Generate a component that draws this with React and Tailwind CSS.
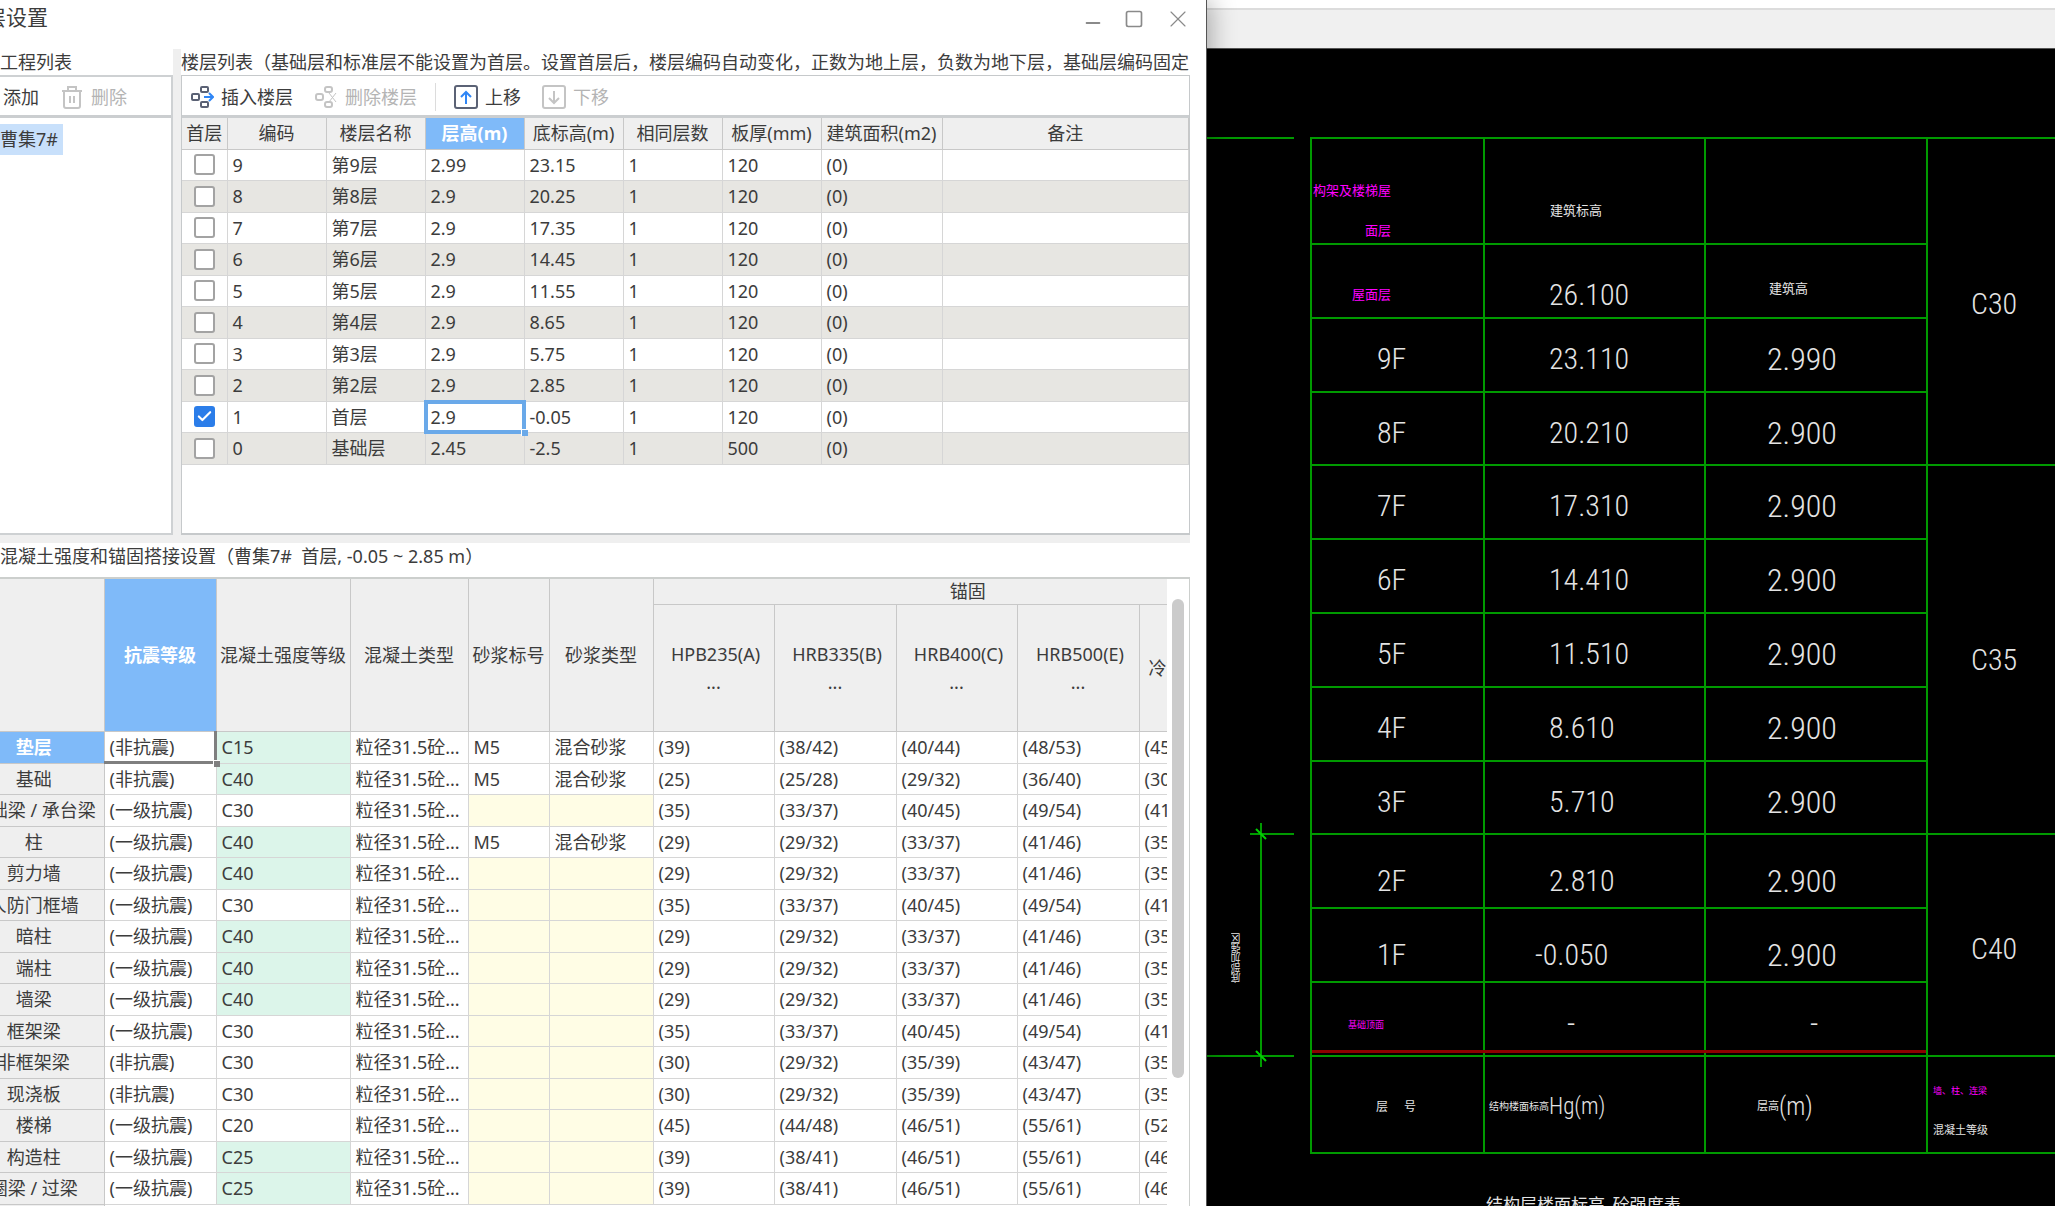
import React, { useState } from "react";
import { Check, Minus, Square, X } from "lucide-react";

const floorRows = [
  ["9", "第9层", "2.99", "23.15", "120"],
  ["8", "第8层", "2.9", "20.25", "120"],
  ["7", "第7层", "2.9", "17.35", "120"],
  ["6", "第6层", "2.9", "14.45", "120"],
  ["5", "第5层", "2.9", "11.55", "120"],
  ["4", "第4层", "2.9", "8.65", "120"],
  ["3", "第3层", "2.9", "5.75", "120"],
  ["2", "第2层", "2.9", "2.85", "120"],
  ["1", "首层", "2.9", "-0.05", "120"],
  ["0", "基础层", "2.45", "-2.5", "500"],
];

const floorHeads = ["首层", "编码", "楼层名称", "层高(m)", "底标高(m)", "相同层数", "板厚(mm)", "建筑面积(m2)", "备注"];

const NONE = "(非抗震)";
const FIRST = "(一级抗震)";

// name, seismic grade, concrete, tinted concrete cell, has mortar, anchorage values
const concreteRows = [
  ["垫层", NONE, "C15", true, true, "(39)", "(38/42)", "(40/44)", "(48/53)", "(45)"],
  ["基础", NONE, "C40", true, true, "(25)", "(25/28)", "(29/32)", "(36/40)", "(30)"],
  ["基础梁 / 承台梁", FIRST, "C30", false, false, "(35)", "(33/37)", "(40/45)", "(49/54)", "(41)"],
  ["柱", FIRST, "C40", true, true, "(29)", "(29/32)", "(33/37)", "(41/46)", "(35)"],
  ["剪力墙", FIRST, "C40", true, false, "(29)", "(29/32)", "(33/37)", "(41/46)", "(35)"],
  ["人防门框墙", FIRST, "C30", false, false, "(35)", "(33/37)", "(40/45)", "(49/54)", "(41)"],
  ["暗柱", FIRST, "C40", true, false, "(29)", "(29/32)", "(33/37)", "(41/46)", "(35)"],
  ["端柱", FIRST, "C40", true, false, "(29)", "(29/32)", "(33/37)", "(41/46)", "(35)"],
  ["墙梁", FIRST, "C40", true, false, "(29)", "(29/32)", "(33/37)", "(41/46)", "(35)"],
  ["框架梁", FIRST, "C30", false, false, "(35)", "(33/37)", "(40/45)", "(49/54)", "(41)"],
  ["非框架梁", NONE, "C30", false, false, "(30)", "(29/32)", "(35/39)", "(43/47)", "(35)"],
  ["现浇板", NONE, "C30", false, false, "(30)", "(29/32)", "(35/39)", "(43/47)", "(35)"],
  ["楼梯", FIRST, "C20", false, false, "(45)", "(44/48)", "(46/51)", "(55/61)", "(52)"],
  ["构造柱", FIRST, "C25", true, false, "(39)", "(38/41)", "(46/51)", "(55/61)", "(46)"],
  ["圈梁 / 过梁", FIRST, "C25", true, false, "(39)", "(38/41)", "(46/51)", "(55/61)", "(46)"],
];

const levelRows = [
  { name: "9F", level: "23.110", height: "2.990" },
  { name: "8F", level: "20.210", height: "2.900", h: "h-[73px]" },
  { name: "7F", level: "17.310", height: "2.900", grade: "C35", span: 5 },
  { name: "6F", level: "14.410", height: "2.900" },
  { name: "5F", level: "11.510", height: "2.900" },
  { name: "4F", level: "8.610", height: "2.900" },
  { name: "3F", level: "5.710", height: "2.900", h: "h-[73px]" },
  { name: "2F", level: "2.810", height: "2.900", grade: "C40", span: 3, low: true },
  { name: "1F", level: "-0.050", height: "2.900", low: true },
];

function InsertIcon() {
  return (
    <svg width="24" height="24" viewBox="0 0 24 24" fill="none" stroke="#5b6275" strokeWidth="2" aria-hidden>
      <rect x="11" y="2" width="7" height="5" rx="1" />
      <rect x="2" y="9" width="7" height="6" rx="1" />
      <rect x="11" y="17" width="7" height="5" rx="1" />
      <path d="M14 12h9M19 8l4 4-4 4" stroke="#2f86f6" />
    </svg>
  );
}

function RemoveIcon() {
  return (
    <svg width="24" height="24" viewBox="0 0 24 24" fill="none" stroke="#c4c4c4" strokeWidth="2" aria-hidden>
      <rect x="11" y="2" width="7" height="5" rx="2" />
      <rect x="2" y="9" width="7" height="6" rx="2" />
      <rect x="11" y="17" width="7" height="5" rx="2" />
      <path d="M15 8l7 9M22 8l-7 9" strokeWidth="1" />
    </svg>
  );
}

function ArrowBox({ down }) {
  return (
    <svg width="24" height="24" viewBox="0 0 24 24" fill="none" stroke={down ? "#c4c4c4" : "#5b6275"} strokeWidth="2" aria-hidden>
      <rect x="1" y="1" width="22" height="22" rx="2" />
      <path
        d={down ? "M12 6v12M7 13l5 5 5-5" : "M12 19V7M7 12l5-5 5 5"}
        stroke={down ? "#c4c4c4" : "#2f86f6"}
      />
    </svg>
  );
}

function TrashIcon() {
  return (
    <svg width="22" height="24" viewBox="0 0 22 24" fill="none" stroke="#c4c4c4" strokeWidth="2" aria-hidden>
      <path d="M1 6h20M7 6V2h8v4M3 6v15a2 2 0 0 0 2 2h12a2 2 0 0 0 2-2V6M9 11v7M13 11v7" />
    </svg>
  );
}

function ProjectPane() {
  return (
    <section className="flex w-[173px] shrink-0 flex-col bg-white">
      <h2 className="h-[26px] leading-[26px]">工程列表</h2>
      <div className="flex flex-1 flex-col border-t-2 border-r-2 border-b-2 border-[#ced1d3]">
        <div className="flex h-[41px] shrink-0 items-center border-b-3 border-[#cbced0] pt-[2px] pl-[3px] whitespace-nowrap">
          <button type="button">添加</button>
          <button type="button" disabled className="ml-[22px] flex items-center gap-2 text-[#b4b4b4]">
            <TrashIcon />
            删除
          </button>
        </div>
        <ul className="pt-[6px]">
          <li className="w-[63px] bg-[#c8e0fb] leading-[31px] whitespace-nowrap">曹集7#</li>
        </ul>
      </div>
    </section>
  );
}

function FloorPane() {
  const [firstFloor, setFirstFloor] = useState("1");

  return (
    <section className="flex min-w-0 flex-1 flex-col bg-white">
      <h2 className="h-[26px] overflow-hidden leading-[26px] whitespace-nowrap">
        楼层列表（基础层和标准层不能设置为首层。设置首层后，楼层编码自动变化，正数为地上层，负数为地下层，基础层编码固定
      </h2>
      <div className="flex flex-1 flex-col border border-b-2 border-[#c6c9cb]">
        <div className="flex h-[42px] shrink-0 items-center border-b-3 border-[#cbced0] pt-[2px] pl-2 whitespace-nowrap">
          <button type="button" className="flex items-center gap-[7px]">
            <InsertIcon />
            插入楼层
          </button>
          <button type="button" disabled className="ml-[21px] flex items-center gap-[7px] text-[#b4b4b4]">
            <RemoveIcon />
            删除楼层
          </button>
          <span className="mr-[18px] ml-[18px] h-7 w-px bg-[#dcdcdc]" />
          <button type="button" className="flex items-center gap-[7px]">
            <ArrowBox />
            上移
          </button>
          <button type="button" disabled className="ml-[21px] flex items-center gap-[7px] text-[#b4b4b4]">
            <ArrowBox down />
            下移
          </button>
        </div>
        <table className="w-full table-fixed border-collapse text-left whitespace-nowrap">
          <colgroup>
            <col className="w-[45px]" />
            <col className="w-[99px]" />
            <col className="w-[99px]" />
            <col className="w-[99px]" />
            <col className="w-[99px]" />
            <col className="w-[99px]" />
            <col className="w-[99px]" />
            <col className="w-[121px]" />
            <col />
          </colgroup>
          <thead>
            <tr className="h-[31px]">
              {floorHeads.map((head) => (
                <th
                  key={head}
                  className={`border-r border-b border-[#c8c8c8] p-0 text-center ${
                    head === "层高(m)" ? "bg-[#7fbaf9] font-bold text-white" : "bg-[#efefef] font-normal"
                  }`}
                >
                  {head}
                </th>
              ))}
            </tr>
          </thead>
          <tbody>
            {floorRows.map(([code, name, height, bottom, slab]) => (
              <tr key={code} className="odd:h-[31px] even:h-8 even:bg-[#e7e6e2] [&>td]:border-r [&>td]:border-b [&>td]:border-[#d6d6d6] [&>td]:p-0 [&>td]:pl-[5px]">
                <td>
                  <label className="relative ml-[7px] block size-[21px]">
                    <input
                      type="checkbox"
                      aria-label={name}
                      checked={firstFloor === code}
                      onChange={() => setFirstFloor(code)}
                      className="block size-[21px] appearance-none rounded-[3px] border-2 border-[#a3a3a3] bg-white checked:border-[#2b7de9] checked:bg-[#2b7de9]"
                    />
                    {firstFloor === code && (
                      <Check className="pointer-events-none absolute top-[2px] left-[2px] size-[17px] text-white" strokeWidth={3} aria-hidden />
                    )}
                  </label>
                </td>
                <td>{code}</td>
                <td>{name}</td>
                <td className="relative">
                  {height}
                  {code === "1" && (
                    <>
                      <span className="absolute -inset-[2px] border-4 border-[#6aa9e9]" />
                      <span className="absolute -right-1 -bottom-1 size-[7px] border-t border-l border-white bg-[#6aa9e9]" />
                    </>
                  )}
                </td>
                <td>{bottom}</td>
                <td>1</td>
                <td>{slab}</td>
                <td>(0)</td>
                <td />
              </tr>
            ))}
          </tbody>
        </table>
      </div>
    </section>
  );
}

function ConcreteTable() {
  return (
    <div className="flex min-h-0 flex-1 border-t-2 border-r border-[#cccfcd]">
      <div className="min-w-0 flex-1 overflow-hidden">
        {/* scrolled sideways, the row heads are partly cut off */}
        <table className="-ml-[36px] w-[1319px] table-fixed border-collapse text-left whitespace-nowrap">
          <colgroup>
            <col className="w-[140px]" />
            <col className="w-[112px]" />
            <col className="w-[134px]" />
            <col className="w-[118px]" />
            <col className="w-[81px]" />
            <col className="w-[104px]" />
            <col className="w-[121px]" />
            <col className="w-[122px]" />
            <col className="w-[121px]" />
            <col className="w-[122px]" />
            <col />
          </colgroup>
          <thead className="[&_th]:border-r [&_th]:border-b [&_th]:border-[#c8c8c8] [&_th]:p-0 [&_th]:text-center [&_th]:font-normal">
            <tr className="h-[25px] bg-[#efefef]">
              <th rowSpan={2} />
              <th rowSpan={2} className="bg-[#7fbaf9] text-white">
                <b>抗震等级</b>
              </th>
              <th rowSpan={2}>混凝土强度等级</th>
              <th rowSpan={2}>混凝土类型</th>
              <th rowSpan={2}>砂浆标号</th>
              <th rowSpan={2}>砂浆类型</th>
              <th colSpan={5} className="leading-6">锚固</th>
            </tr>
            <tr className="h-[127px] bg-[#efefef]">
              {["HPB235(A)", "HRB335(B)", "HRB400(C)", "HRB500(E)"].map((bar) => (
                <th key={bar} className="leading-7">
                  <span className="pl-1">{bar}</span>
                  <br />
                  ...
                </th>
              ))}
              <th>
                <span className="block pl-[9px] text-left">冷轧带肋钢筋</span>
              </th>
            </tr>
          </thead>
          <tbody>
            {concreteRows.map(([name, seismic, grade, tinted, mortar, ...anchors], i) => (
              <tr
                key={name}
                className="odd:h-8 even:h-[31px] [&>td]:border-r [&>td]:border-b [&>td]:border-[#d6d6d6] [&>td]:p-0 [&>td]:pl-[5px]"
              >
                <th
                  className={`border-r border-b border-[#c8c8c8] p-0 text-center ${
                    i === 0 ? "bg-[#7fbaf9] font-bold text-white" : "bg-[#efefef] font-normal"
                  }`}
                >
                  {name}
                </th>
                <td className="relative">
                  {seismic}
                  {i === 0 && (
                    <>
                      <span className="absolute -inset-px border-r-3 border-b-3 border-[#7f7f7f]" />
                      <span className="absolute -right-1 -bottom-1 size-[7px] border-t border-l border-white bg-[#7f7f7f]" />
                    </>
                  )}
                </td>
                <td className={tinted ? "bg-[#dcf5ea]" : ""}>{grade}</td>
                <td>粒径31.5砼...</td>
                <td className={mortar ? "" : "bg-[#fffde5]"}>{mortar && "M5"}</td>
                <td className={mortar ? "" : "bg-[#fffde5]"}>{mortar && "混合砂浆"}</td>
                {anchors.map((value, k) => (
                  <td key={k}>{value}</td>
                ))}
              </tr>
            ))}
            <tr className="h-[31px]">
              <th className="border-r border-[#c8c8c8] bg-[#efefef]" />
              <td colSpan={10} />
            </tr>
          </tbody>
        </table>
      </div>
      <div className="w-[22px] shrink-0 pt-5 pl-[5px]">
        <div className="h-[479px] w-3 rounded-full bg-[#cbcbcb]" />
      </div>
    </div>
  );
}

function SettingsWindow() {
  return (
    <div className="relative z-10 flex min-w-0 flex-col overflow-hidden border-r border-[#555] bg-white pr-4 text-[18px] leading-6 text-[#3c3c3c] shadow-[4px_0_24px_rgba(0,0,0,0.3)]">
      <header className="flex h-[49px] shrink-0 items-start justify-between pt-1">
        <h1 className="-ml-[36px] text-[21px] leading-[26px] whitespace-nowrap">楼层设置</h1>
        <div className="-mr-[2px] flex items-center gap-5 text-[#8a8a8a]">
          <button type="button" aria-label="最小化">
            <Minus className="mt-2 size-[22px]" strokeWidth={2} />
          </button>
          <button type="button" aria-label="最大化">
            <Square className="size-5" strokeWidth={2} />
          </button>
          <button type="button" aria-label="关闭">
            <X className="size-7" strokeWidth={1} />
          </button>
        </div>
      </header>
      <div className="flex h-[494px] shrink-0 gap-2 bg-[#efefef] pb-2">
        <ProjectPane />
        <FloorPane />
      </div>
      <h2 className="h-[34px] shrink-0 leading-[26px] whitespace-pre">
        混凝土强度和锚固搭接设置（曹集7#{"  "}首层, -0.05 ~ 2.85 m）
      </h2>
      <ConcreteTable />
    </div>
  );
}

function DimensionLine() {
  return (
    <svg className="absolute inset-0 h-full w-[103px]" fill="none" stroke="#009a00" strokeWidth="2" aria-hidden>
      <path d="M0 89H87M43 785H87M0 1007H87M54 774V1018" />
      <path d="M49 780l10 10M49 1002l10 10" stroke="#00d000" />
    </svg>
  );
}

function LevelTable() {
  return (
    <table className="w-[calc(100%+2px)] table-fixed border-collapse text-left [&_td]:border-2 [&_td]:border-[#009a00] [&_td]:p-0">
      <colgroup>
        <col className="w-[173px]" />
        <col className="w-[221px]" />
        <col className="w-[222px]" />
        <col />
      </colgroup>
      <tbody>
        <tr className="h-[106px]">
          <td className="text-[13px] leading-10 font-normal text-[#ff00ff]">
            <div className="h-[102px] pt-[31px] pr-[92px] text-right whitespace-nowrap">
              构架及楼梯屋
              <br />
              面层
            </div>
          </td>
          <td className="text-[13px] font-normal">
            <div className="pt-10 pl-[65px]">建筑标高</div>
          </td>
          <td />
          <td rowSpan={4} className="text-[30px]">
            <div className="pt-1 pl-[43px]">C30</div>
          </td>
        </tr>
        <tr className="h-[74px]">
          <td className="text-[13px] font-normal text-[#ff00ff]">
            <div className="pt-7 pr-[92px] text-right">屋面层</div>
          </td>
          <td className="text-[30px]">
            <div className="pt-7 pl-[64px]">26.100</div>
          </td>
          <td className="text-[13px] font-normal">
            <div className="pt-4 pl-[63px]">建筑高</div>
          </td>
        </tr>
        {levelRows.map((row) => (
          <tr key={row.name} className={row.h || "h-[74px]"}>
            <td className="text-[30px]">
              <div className={row.low ? "pt-5 pl-[65px]" : "pt-2 pl-[65px]"}>{row.name}</div>
            </td>
            <td className="text-[30px]">
              <div className={`${row.low ? "pt-5" : "pt-2"} ${row.level.startsWith("-") ? "pl-[50px]" : "pl-[64px]"}`}>
                {row.level}
              </div>
            </td>
            <td className="text-[32px]">
              <div className={row.low ? "pt-5 pl-[61px]" : "pt-2 pl-[61px]"}>{row.height}</div>
            </td>
            {row.span && (
              <td rowSpan={row.span} className="text-[30px]">
                <div className={row.grade === "C35" ? "pt-5 pl-[43px]" : "pt-2 pl-[43px]"}>{row.grade}</div>
              </td>
            )}
          </tr>
        ))}
        <tr className="h-[74px]">
          <td className="text-[9px] font-normal text-[#ff00ff]">
            {/* red base line runs just above the grid line */}
            <div className="relative flex h-[72px] items-center pt-3 pl-9">
              基础顶面
              <span className="absolute bottom-[2px] left-0 h-[3px] w-[614px] bg-[#8c0000]" />
            </div>
          </td>
          <td className="text-[32px]">
            <div className="pt-2 pl-[82px]">-</div>
          </td>
          <td className="text-[32px]">
            <div className="pt-2 pl-[104px]">-</div>
          </td>
        </tr>
        <tr className="h-[97px]">
          <td className="text-[12px] font-normal">
            <div className="flex gap-4 pt-1 pl-[64px]">
              <span>层</span>
              <span>号</span>
            </div>
          </td>
          <td className="whitespace-nowrap">
            <div className="flex items-center pt-1 pl-1">
              <span className="text-[10px] font-normal">结构楼面标高</span>
              <span className="text-[23px]">Hg(m)</span>
            </div>
          </td>
          <td>
            <div className="flex items-center pt-1 pl-[51px]">
              <span className="text-[11px] font-normal">层高</span>
              <span className="text-[25px]">(m)</span>
            </div>
          </td>
          <td className="font-normal whitespace-nowrap">
            <div className="pt-3 pl-[5px] text-[9px] leading-10 text-[#ff00ff]">墙、柱、连梁</div>
            <div className="pl-[5px] text-[11px] leading-10">混凝土等级</div>
          </td>
        </tr>
      </tbody>
    </table>
  );
}

export default function App() {
  return (
    <div
      lang="zh-CN"
      className="grid h-screen grid-cols-[minmax(0,1207fr)_minmax(0,848fr)] overflow-hidden font-['Noto_Sans','Noto_Sans_CJK_SC',sans-serif]"
    >
      <SettingsWindow />
      <main className="flex min-w-0 flex-col bg-black">
        <div className="h-[10px] shrink-0 border-b-2 border-[#dcdcdc] bg-white" />
        <div className="h-[39px] shrink-0 border-b border-[#555] bg-[#f0f0f0]" />
        <div className="relative flex-1 overflow-hidden pt-[88px] pl-[103px] font-['Roboto_Condensed','Liberation_Sans_Narrow','Noto_Sans_CJK_SC',sans-serif] leading-9 font-light text-[#e4e4e4]">
          <DimensionLine />
          <span className="absolute top-[884px] left-[14px] rotate-180 text-[10px] leading-8 font-normal [writing-mode:vertical-rl]">
            底部加强区
          </span>
          <LevelTable />
          <p className="pt-[33px] pl-[176px] text-[17px] font-normal whitespace-pre">结构层楼面标高{"  "}砼强度表</p>
        </div>
      </main>
    </div>
  );
}
